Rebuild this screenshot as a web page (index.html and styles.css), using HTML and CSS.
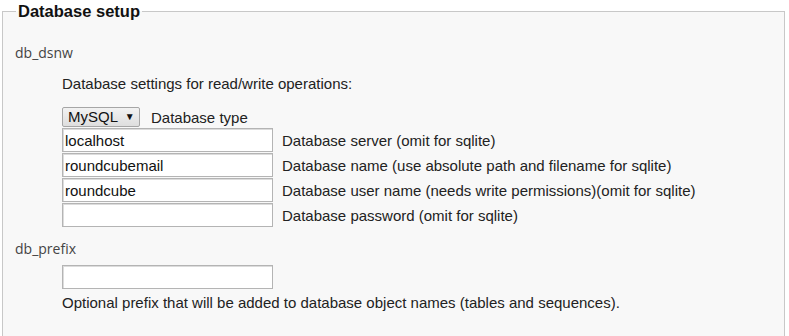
FILE: index.html
```html
<!DOCTYPE html>
<html>
<head>
    <title>Roundcube Webmail Installer</title>
    <link rel="stylesheet" href="styles.css">
</head>
<body>
    <fieldset class="setup">
        <legend>Database setup</legend>
        <dl class="config">
            <dt>db_dsnw</dt>
            <dd>
                <p class="hint">Database settings for read/write operations:</p>
                <div class="type-row">
                    <span class="select">MySQL <span class="arrow">&#9660;</span></span>
                    <span class="type-label">Database type</span>
                </div>
                <table class="dsn">
                    <tr>
                        <td><input class="field" type="text" value="localhost"></td>
                        <td class="label">Database server (omit for sqlite)</td>
                    </tr>
                    <tr>
                        <td><input class="field" type="text" value="roundcubemail"></td>
                        <td class="label">Database name (use absolute path and filename for sqlite)</td>
                    </tr>
                    <tr>
                        <td><input class="field" type="text" value="roundcube"></td>
                        <td class="label">Database user name (needs write permissions)(omit for sqlite)</td>
                    </tr>
                    <tr>
                        <td><input class="field" type="password" value=""></td>
                        <td class="label">Database password (omit for sqlite)</td>
                    </tr>
                </table>
            </dd>
            <dt class="next">db_prefix</dt>
            <dd>
                <input class="field prefix" type="text" value="">
                <div class="note">Optional prefix that will be added to database object names (tables and sequences).</div>
            </dd>
        </dl>
    </fieldset>
</body>
</html>
```

FILE: styles.css
```css
body {
    margin: 0;
    background: #fff;
    font-family: "Liberation Sans", Arial, sans-serif;
    font-size: 15px;
    color: #222;
}

.setup {
    margin: 0 4px 0 2px;
    padding: 0 12px 40px 12px;
    border: 1px solid #c8c8c8;
    background: #f8f8f8;
}

.setup legend {
    padding: 0 2px;
    margin-left: 1px;
    font-weight: bold;
    font-size: 16.5px;
    line-height: 22px;
    color: #111;
}

.config {
    margin: 0;
}

.config dt {
    margin-top: 21px;
    font-family: "Open Sans", sans-serif;
    font-size: 14px;
    color: #444;
}

.config dt.next {
    margin-top: 11px;
}

.config dd {
    margin: 0 0 0 47px;
}

.hint {
    margin: 13px 0 15px 0;
}

.type-row {
    display: flex;
    align-items: center;
    gap: 11px;
    height: 20px;
    margin-bottom: 1px;
}

.dsn {
    border-collapse: collapse;
}

.dsn td {
    padding: 0 0 1px 0;
}

.dsn .label {
    padding-left: 9px;
}

.select {
    display: inline-block;
    box-sizing: border-box;
    width: 78px;
    height: 20px;
    padding: 0 0 0 5px;
    line-height: 18px;
    border: 1px solid #a6a6a6;
    border-radius: 2px;
    background: linear-gradient(#f2f2f2, #dedede);
    color: #111;
}

.arrow {
    font-size: 10px;
    margin-left: 3px;
    position: relative;
    top: -2px;
}

.field {
    box-sizing: border-box;
    width: 211px;
    height: 24px;
    margin: 0;
    padding: 0 2px;
    border: 1px solid #b4b4b4;
    box-shadow: inset 1px 1px 0 #dcdcdc;
    background: #fff;
    font-family: "Liberation Sans", Arial, sans-serif;
    font-size: 15px;
    color: #111;
    display: block;
}

.field.prefix {
    margin-top: 7px;
}

.note {
    margin-top: 5px;
}
```
